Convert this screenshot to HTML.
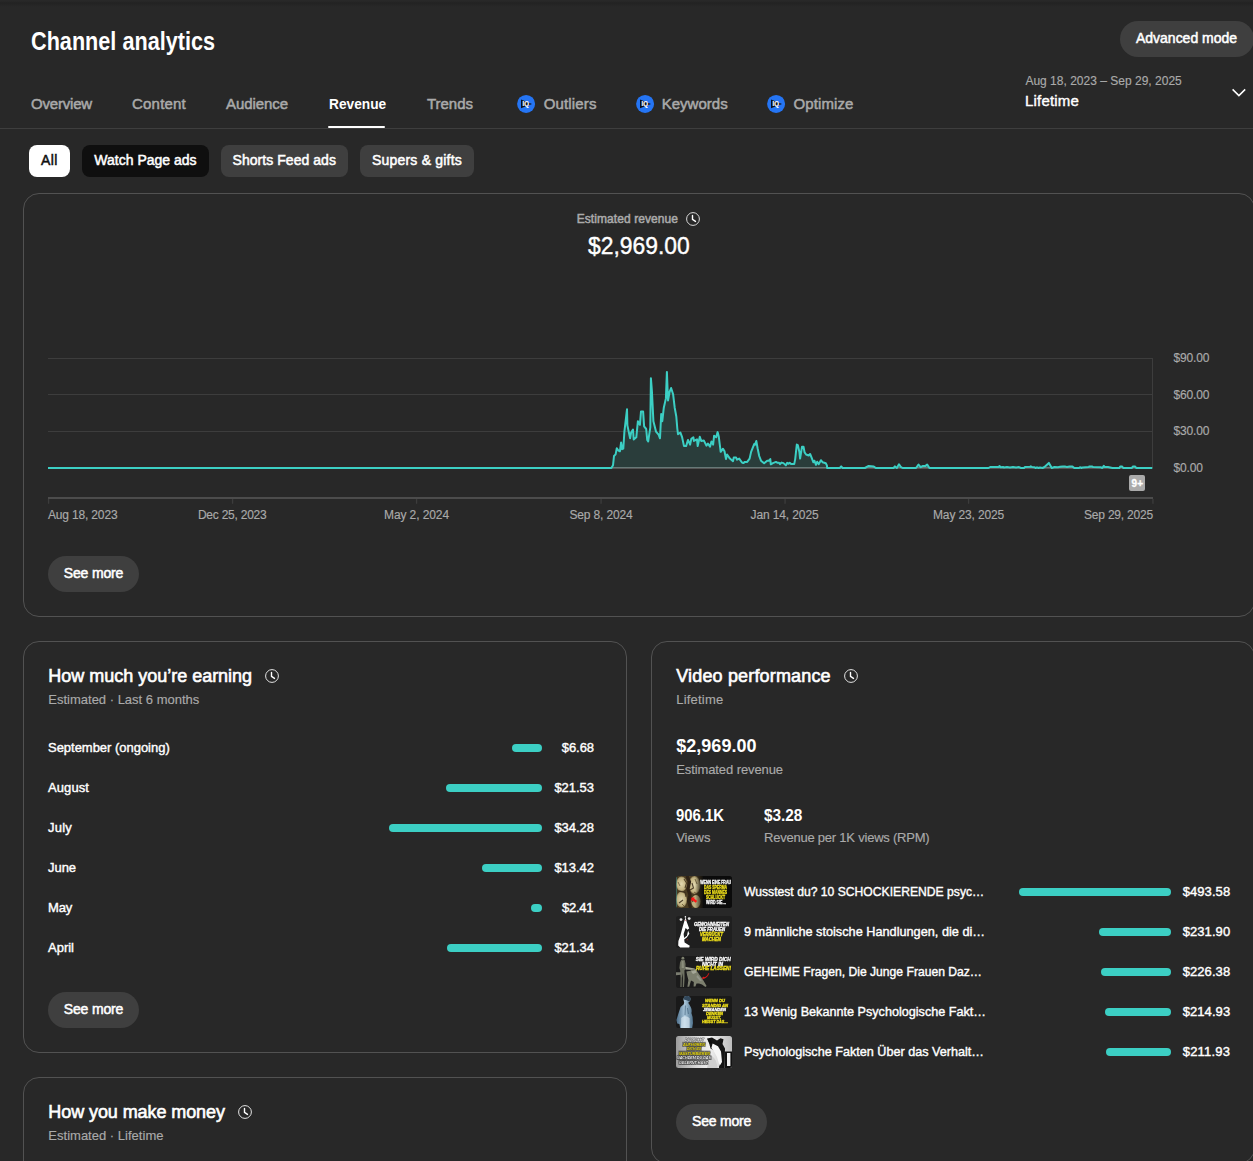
<!DOCTYPE html>
<html lang="en"><head><meta charset="utf-8"><title>Channel analytics</title><style>
html,body{margin:0;padding:0;background:#282828;}
body{width:1253px;height:1161px;overflow:hidden;position:relative;font-family:"Liberation Sans", sans-serif;}
.abs{position:absolute;}
.t{position:absolute;white-space:nowrap;margin:0;}
.t.r{-webkit-text-stroke:0.15px currentColor;}
.t.l{-webkit-text-stroke:0.4px currentColor;}
.t.m{-webkit-text-stroke:0.5px currentColor;}
.t.h{-webkit-text-stroke:0.6px currentColor;}
.t.b{font-weight:700;}
.card{box-sizing:border-box;border:1px solid #525252;border-radius:16px;}
.bar{height:8px;border-radius:4px;background:#3ccfc4;}
</style></head>
<body>
<div class="abs" style="left:0;top:0;width:1253px;height:8px;background:linear-gradient(#282828 0,#282828 1px,#222 3px,#242424 4px,#282828 7px)"></div>
<div class="abs" style="left:0;top:128px;width:1253px;height:1px;background:#3e3e3e"></div>
<div class="abs" style="left:328px;top:125.6px;width:57.2px;height:2.4px;border-radius:1.2px;background:#fff"></div>
<div class="abs" style="left:1120px;top:21px;width:133.5px;height:36px;border-radius:18.0px;background:#3f3f3f"></div>
<svg class="abs" style="left:1229px;top:84px" width="20" height="18" viewBox="0 0 20 18"><path d="M3.6 5.4 L9.9 11.6 L16.2 5.4" fill="none" stroke="#fff" stroke-width="1.5"/></svg>
<svg class="abs" style="left:516px;top:94px" width="20" height="20" viewBox="-10 -10 20 20"><circle cx="0.1" cy="-0.1" r="9" fill="#2575f4"/><path d="M-5 -4.5 L6 0 L-5 4.3 Z" fill="#0a0f1c"/><text x="-3.5" y="2.35" font-family='"Liberation Sans", sans-serif' font-size="6.4" font-weight="700" fill="#fff" stroke="#fff" stroke-width="0.2" textLength="6.5" lengthAdjust="spacingAndGlyphs">IQ</text></svg>
<svg class="abs" style="left:635px;top:94px" width="20" height="20" viewBox="-10 -10 20 20"><circle cx="0.1" cy="-0.1" r="9" fill="#2575f4"/><path d="M-5 -4.5 L6 0 L-5 4.3 Z" fill="#0a0f1c"/><text x="-3.5" y="2.35" font-family='"Liberation Sans", sans-serif' font-size="6.4" font-weight="700" fill="#fff" stroke="#fff" stroke-width="0.2" textLength="6.5" lengthAdjust="spacingAndGlyphs">IQ</text></svg>
<svg class="abs" style="left:766px;top:94px" width="20" height="20" viewBox="-10 -10 20 20"><circle cx="0.1" cy="-0.1" r="9" fill="#2575f4"/><path d="M-5 -4.5 L6 0 L-5 4.3 Z" fill="#0a0f1c"/><text x="-3.5" y="2.35" font-family='"Liberation Sans", sans-serif' font-size="6.4" font-weight="700" fill="#fff" stroke="#fff" stroke-width="0.2" textLength="6.5" lengthAdjust="spacingAndGlyphs">IQ</text></svg>
<div class="abs" style="left:29px;top:145px;width:41px;height:32px;border-radius:8px;background:#ffffff"></div>
<div class="abs" style="left:82px;top:145px;width:127px;height:32px;border-radius:8px;background:#0f0f0f"></div>
<div class="abs" style="left:220.5px;top:145px;width:127.5px;height:32px;border-radius:8px;background:#3f3f3f"></div>
<div class="abs" style="left:360px;top:145px;width:114px;height:32px;border-radius:8px;background:#3f3f3f"></div>
<div class="abs card" style="left:23px;top:193px;width:1232px;height:423.5px"></div>
<div class="abs card" style="left:23px;top:641px;width:604px;height:411.5px"></div>
<div class="abs card" style="left:651px;top:641px;width:604px;height:523px"></div>
<div class="abs card" style="left:23px;top:1077px;width:604px;height:223px"></div>
<svg class="abs" style="left:0;top:0" width="1253" height="560" viewBox="0 0 1253 560"><rect x="48" y="358" width="1105" height="1" fill="#3d3d3d"/><rect x="48" y="394" width="1105" height="1" fill="#3d3d3d"/><rect x="48" y="431" width="1105" height="1" fill="#3d3d3d"/><rect x="48" y="467.4" width="1104" height="1" fill="#9a9a9a"/><rect x="1152" y="358" width="1" height="110" fill="#3d3d3d"/><rect x="48" y="497" width="1105" height="2" fill="#4c4c4c"/><rect x="47.9" y="499" width="1.3" height="4.8" fill="#3c3c3c"/><rect x="231.9" y="499" width="1.3" height="4.8" fill="#3c3c3c"/><rect x="415.9" y="499" width="1.3" height="4.8" fill="#3c3c3c"/><rect x="600.4" y="499" width="1.3" height="4.8" fill="#3c3c3c"/><rect x="784.4" y="499" width="1.3" height="4.8" fill="#3c3c3c"/><rect x="967.9" y="499" width="1.3" height="4.8" fill="#3c3c3c"/><rect x="1152.3000000000002" y="499" width="1.3" height="4.8" fill="#3c3c3c"/><polygon points="48,468 48.0,468.0 611.4,468.0 613.0,465.3 614.0,456.0 615.6,454.4 616.8,448.2 618.2,450.3 619.9,451.3 621.1,442.5 622.1,449.2 623.3,448.7 624.4,431.6 627.0,409.3 627.4,425.4 630.1,438.3 631.1,432.6 633.0,429.5 633.7,439.4 636.3,437.3 637.9,421.2 639.9,424.8 641.0,411.4 643.1,411.4 644.1,426.4 646.2,429.0 647.2,439.9 648.2,441.4 650.3,427.4 650.9,378.2 651.9,391.1 653.4,421.2 656.0,431.6 658.6,434.7 660.0,438.3 661.2,414.0 662.3,421.2 663.8,407.7 665.9,398.4 666.9,371.9 668.0,400.5 669.5,392.2 671.1,388.0 673.1,394.2 674.7,407.7 676.3,416.5 677.3,428.5 678.0,434.2 680.4,432.6 682.0,436.8 684.0,446.1 686.1,446.1 688.0,439.9 690.1,444.6 691.3,438.9 693.4,437.3 693.9,440.9 697.0,439.4 697.7,446.1 699.8,436.8 701.2,440.9 703.8,440.4 706.4,445.6 707.9,443.5 710.0,446.6 711.5,441.4 713.1,444.6 714.1,435.7 716.2,437.3 717.6,432.1 718.8,436.8 720.7,451.8 723.0,448.7 724.5,451.3 726.0,459.1 727.1,454.5 729.9,458.6 733.0,461.2 733.7,457.6 736.1,457.6 737.1,459.7 739.2,458.6 741.8,462.3 743.3,463.1 744.9,461.9 747.2,461.9 749.6,458.6 751.1,451.9 754.2,444.1 755.0,444.6 756.3,441.0 757.6,448.2 759.2,456.0 761.0,460.7 764.1,463.3 767.2,460.7 768.8,460.7 770.3,459.1 770.8,464.3 772.9,463.1 776.0,461.9 777.6,462.8 779.1,462.8 780.0,464.1 781.7,462.6 783.5,463.1 785.9,465.4 787.2,462.8 788.5,463.8 789.7,462.8 791.1,464.1 794.2,464.1 795.2,459.1 796.8,444.6 797.8,445.1 799.4,451.9 800.1,458.6 802.0,446.7 803.5,446.7 804.6,452.4 806.1,454.5 808.7,455.5 810.1,454.0 811.8,458.1 813.4,462.3 814.4,460.7 816.0,464.8 817.2,461.7 818.8,464.1 820.9,460.2 822.7,462.3 825.8,463.3 826.9,465.4 827.1,468.0 839.8,468.0 841.2,466.4 842.6,468.0 864.9,468.0 868.7,465.9 873.8,466.6 875.8,468.0 893.6,468.0 894.9,466.4 896.8,468.0 899.0,464.3 900.7,466.8 902.6,468.0 916.0,468.0 918.5,464.6 920.7,467.2 923.0,465.9 925.6,465.9 927.2,464.6 929.4,468.0 988.5,468.0 990.2,467.0 998.6,467.0 999.6,466.0 1000.6,467.3 1003.0,467.0 1004.0,467.5 1007.0,467.1 1010.0,467.5 1013.0,467.0 1016.0,467.5 1019.0,467.1 1021.0,468.0 1024.0,468.0 1025.0,466.9 1030.0,466.8 1030.8,466.3 1032.0,467.0 1034.5,467.2 1035.5,468.0 1037.0,467.3 1038.5,468.0 1040.0,467.5 1042.6,468.0 1044.5,467.0 1048.9,462.9 1051.8,468.0 1054.4,467.0 1058.0,467.2 1060.0,466.8 1062.8,466.6 1065.5,466.6 1067.0,467.0 1069.4,466.6 1072.5,466.6 1074.3,468.0 1079.1,468.0 1080.3,467.2 1081.4,468.0 1082.5,467.4 1088.8,466.9 1089.5,466.4 1092.3,466.4 1093.0,467.0 1100.6,467.2 1102.3,468.0 1103.8,465.9 1104.6,467.0 1108.0,467.0 1112.4,468.0 1119.4,468.0 1120.2,466.6 1122.2,466.6 1123.2,468.0 1131.9,468.0 1132.8,466.6 1135.2,466.6 1136.2,468.0 1152.3,468.0 1152.1,468" fill="#3ccfc4" fill-opacity="0.13"/><polyline points="48.0,468.0 611.4,468.0 613.0,465.3 614.0,456.0 615.6,454.4 616.8,448.2 618.2,450.3 619.9,451.3 621.1,442.5 622.1,449.2 623.3,448.7 624.4,431.6 627.0,409.3 627.4,425.4 630.1,438.3 631.1,432.6 633.0,429.5 633.7,439.4 636.3,437.3 637.9,421.2 639.9,424.8 641.0,411.4 643.1,411.4 644.1,426.4 646.2,429.0 647.2,439.9 648.2,441.4 650.3,427.4 650.9,378.2 651.9,391.1 653.4,421.2 656.0,431.6 658.6,434.7 660.0,438.3 661.2,414.0 662.3,421.2 663.8,407.7 665.9,398.4 666.9,371.9 668.0,400.5 669.5,392.2 671.1,388.0 673.1,394.2 674.7,407.7 676.3,416.5 677.3,428.5 678.0,434.2 680.4,432.6 682.0,436.8 684.0,446.1 686.1,446.1 688.0,439.9 690.1,444.6 691.3,438.9 693.4,437.3 693.9,440.9 697.0,439.4 697.7,446.1 699.8,436.8 701.2,440.9 703.8,440.4 706.4,445.6 707.9,443.5 710.0,446.6 711.5,441.4 713.1,444.6 714.1,435.7 716.2,437.3 717.6,432.1 718.8,436.8 720.7,451.8 723.0,448.7 724.5,451.3 726.0,459.1 727.1,454.5 729.9,458.6 733.0,461.2 733.7,457.6 736.1,457.6 737.1,459.7 739.2,458.6 741.8,462.3 743.3,463.1 744.9,461.9 747.2,461.9 749.6,458.6 751.1,451.9 754.2,444.1 755.0,444.6 756.3,441.0 757.6,448.2 759.2,456.0 761.0,460.7 764.1,463.3 767.2,460.7 768.8,460.7 770.3,459.1 770.8,464.3 772.9,463.1 776.0,461.9 777.6,462.8 779.1,462.8 780.0,464.1 781.7,462.6 783.5,463.1 785.9,465.4 787.2,462.8 788.5,463.8 789.7,462.8 791.1,464.1 794.2,464.1 795.2,459.1 796.8,444.6 797.8,445.1 799.4,451.9 800.1,458.6 802.0,446.7 803.5,446.7 804.6,452.4 806.1,454.5 808.7,455.5 810.1,454.0 811.8,458.1 813.4,462.3 814.4,460.7 816.0,464.8 817.2,461.7 818.8,464.1 820.9,460.2 822.7,462.3 825.8,463.3 826.9,465.4 827.1,468.0 839.8,468.0 841.2,466.4 842.6,468.0 864.9,468.0 868.7,465.9 873.8,466.6 875.8,468.0 893.6,468.0 894.9,466.4 896.8,468.0 899.0,464.3 900.7,466.8 902.6,468.0 916.0,468.0 918.5,464.6 920.7,467.2 923.0,465.9 925.6,465.9 927.2,464.6 929.4,468.0 988.5,468.0 990.2,467.0 998.6,467.0 999.6,466.0 1000.6,467.3 1003.0,467.0 1004.0,467.5 1007.0,467.1 1010.0,467.5 1013.0,467.0 1016.0,467.5 1019.0,467.1 1021.0,468.0 1024.0,468.0 1025.0,466.9 1030.0,466.8 1030.8,466.3 1032.0,467.0 1034.5,467.2 1035.5,468.0 1037.0,467.3 1038.5,468.0 1040.0,467.5 1042.6,468.0 1044.5,467.0 1048.9,462.9 1051.8,468.0 1054.4,467.0 1058.0,467.2 1060.0,466.8 1062.8,466.6 1065.5,466.6 1067.0,467.0 1069.4,466.6 1072.5,466.6 1074.3,468.0 1079.1,468.0 1080.3,467.2 1081.4,468.0 1082.5,467.4 1088.8,466.9 1089.5,466.4 1092.3,466.4 1093.0,467.0 1100.6,467.2 1102.3,468.0 1103.8,465.9 1104.6,467.0 1108.0,467.0 1112.4,468.0 1119.4,468.0 1120.2,466.6 1122.2,466.6 1123.2,468.0 1131.9,468.0 1132.8,466.6 1135.2,466.6 1136.2,468.0 1152.3,468.0" fill="none" stroke="#3ccfc4" stroke-width="2" stroke-linejoin="round" stroke-linecap="butt"/></svg>
<svg class="abs" style="left:684.1px;top:209.9px" width="18" height="18" viewBox="-9 -9 18 18"><circle cx="0" cy="0" r="6.4" fill="none" stroke="#d8d8d8" stroke-width="1"/><path d="M-0.5 -3.5 V0.4 L2.5 2.4" fill="none" stroke="#fff" stroke-width="1.4" stroke-linecap="round" stroke-linejoin="round"/></svg>
<div class="abs" style="left:1129.3px;top:475px;width:16px;height:16px;border-radius:2px;background:#aaaaaa;color:#fff;font-size:10px;font-weight:700;line-height:17px;text-align:center;-webkit-text-stroke:0.3px #fff">9+</div>
<div class="abs" style="left:48px;top:555.5px;width:91px;height:36.0px;border-radius:18.0px;background:#3f3f3f"></div>
<div class="abs" style="left:48px;top:991.5px;width:91px;height:36.0px;border-radius:18.0px;background:#3f3f3f"></div>
<div class="abs" style="left:676px;top:1103.5px;width:91px;height:36.0px;border-radius:18.0px;background:#3f3f3f"></div>
<svg class="abs" style="left:263px;top:667px" width="18" height="18" viewBox="-9 -9 18 18"><circle cx="0" cy="0" r="6.4" fill="none" stroke="#e4e4e4" stroke-width="1"/><path d="M-0.5 -3.5 V0.4 L2.5 2.4" fill="none" stroke="#fff" stroke-width="1.4" stroke-linecap="round" stroke-linejoin="round"/></svg>
<svg class="abs" style="left:842px;top:667px" width="18" height="18" viewBox="-9 -9 18 18"><circle cx="0" cy="0" r="6.4" fill="none" stroke="#e4e4e4" stroke-width="1"/><path d="M-0.5 -3.5 V0.4 L2.5 2.4" fill="none" stroke="#fff" stroke-width="1.4" stroke-linecap="round" stroke-linejoin="round"/></svg>
<svg class="abs" style="left:236px;top:1103px" width="18" height="18" viewBox="-9 -9 18 18"><circle cx="0" cy="0" r="6.4" fill="none" stroke="#e4e4e4" stroke-width="1"/><path d="M-0.5 -3.5 V0.4 L2.5 2.4" fill="none" stroke="#fff" stroke-width="1.4" stroke-linecap="round" stroke-linejoin="round"/></svg>
<div class="abs bar" style="left:512px;top:744px;width:30px"></div>
<div class="abs bar" style="left:446px;top:784px;width:96px"></div>
<div class="abs bar" style="left:389px;top:824px;width:153px"></div>
<div class="abs bar" style="left:482px;top:864px;width:60px"></div>
<div class="abs bar" style="left:531px;top:904px;width:11px"></div>
<div class="abs bar" style="left:447px;top:944px;width:95px"></div>
<div class="abs bar" style="left:1019px;top:888px;width:152px"></div>
<div class="abs bar" style="left:1099px;top:928px;width:72px"></div>
<div class="abs bar" style="left:1101px;top:968px;width:70px"></div>
<div class="abs bar" style="left:1105px;top:1008px;width:66px"></div>
<div class="abs bar" style="left:1106px;top:1048px;width:65px"></div>
<svg class="abs" style="left:676px;top:876px;will-change:transform" width="56" height="32" viewBox="0 0 56 32" font-family="Liberation Sans, sans-serif"><defs><clipPath id="tc0"><rect width="56" height="32" rx="2.5"/></clipPath><radialGradient id="g1a" cx="0.5" cy="0.5" r="0.6"><stop offset="0" stop-color="#e2d8b0"/><stop offset="0.65" stop-color="#c3b482"/><stop offset="1" stop-color="#5d4c2a"/></radialGradient><linearGradient id="g1b" x1="0" x2="1"><stop offset="0" stop-color="#000" stop-opacity="0"/><stop offset="1" stop-color="#0b0b0b"/></linearGradient></defs><g clip-path="url(#tc0)"><rect width="56" height="32" fill="#0b0b0b"/><rect width="27" height="32" fill="#4a3c22"/><ellipse cx="5.5" cy="8" rx="5.5" ry="7.5" fill="url(#g1a)"/><ellipse cx="18.5" cy="9" rx="6" ry="9" fill="url(#g1a)"/><ellipse cx="5.5" cy="23.5" rx="5.5" ry="8" fill="url(#g1a)"/><ellipse cx="20" cy="25.5" rx="4.6" ry="6.4" fill="#bfb080"/><path d="M11 0 L13.5 6 L12 13 L14 19 L12.5 25 L14.5 32" fill="none" stroke="#2e2216" stroke-width="3.2"/><path d="M8 3 L10.5 7 L9 12 M14 14 L17.5 12 L16 7 M3 15 L9 16.5 L10 21 M15 21 L17 26 M3 27 L7 24" stroke="#3a2c1a" stroke-width="1.1" fill="none" opacity="0.85"/><path d="M2 6 L4 10 M19 3 L21 8 M6 28 L8 30 M18 16 L21 18" stroke="#5a4828" stroke-width="0.9" fill="none" opacity="0.8"/><rect x="0" y="0" width="0.8" height="32" fill="#3a8a8a" opacity="0.7"/><rect x="19" y="0" width="9" height="32" fill="url(#g1b)"/><path d="M15.2 21.8 L18.6 21.2 L18.2 22.6 L21.2 25 L19.6 26.8 L16.8 24.4 L15.6 25.4 Z" fill="#ff1616"/><text x="24.3" y="8.30" font-size="5.03" font-weight="700" fill="#ffffff" stroke="#ffffff" stroke-width="0.28" textLength="30.7" lengthAdjust="spacingAndGlyphs">WENN EINE FRAU</text><text x="28.0" y="12.60" font-size="5.31" font-weight="700" fill="#f2e21a" stroke="#f2e21a" stroke-width="0.28" textLength="23.0" lengthAdjust="spacingAndGlyphs">DAS SPERMA</text><text x="28.0" y="17.50" font-size="5.31" font-weight="700" fill="#f2e21a" stroke="#f2e21a" stroke-width="0.28" textLength="23.0" lengthAdjust="spacingAndGlyphs">DES MANNES</text><text x="30.0" y="22.50" font-size="5.31" font-weight="700" fill="#f2e21a" stroke="#f2e21a" stroke-width="0.28" textLength="19.0" lengthAdjust="spacingAndGlyphs">SCHLUCKT</text><text x="30.0" y="27.90" font-size="5.03" font-weight="700" fill="#ffffff" stroke="#ffffff" stroke-width="0.28" textLength="20.0" lengthAdjust="spacingAndGlyphs">WIRD SIE…</text></g></svg>
<svg class="abs" style="left:676px;top:916px;will-change:transform" width="56" height="32" viewBox="0 0 56 32" font-family="Liberation Sans, sans-serif"><defs><clipPath id="tc1"><rect width="56" height="32" rx="2.5"/></clipPath></defs><g clip-path="url(#tc1)"><rect width="56" height="32" fill="#1f1f1f"/><path d="M9.6 1.2 L10.6 5.5 L13.2 12.5 L11.6 13.5 L13.4 17.8 L10.8 21.5 L8.2 23.5 L8.6 26.5 L13.8 29.8 L13.2 31.4 L4.2 31.6 L2.2 29.6 L2.4 25 L4.4 19.5 L6.2 12.5 L8.2 5.5 Z" fill="#fff"/><path d="M9.6 12 L12.2 14.2 L11 19.5 L8.2 22 L7.6 18 Z" fill="#1f1f1f"/><circle cx="5" cy="3.6" r="1.4" fill="#e8e8e8"/><circle cx="13.2" cy="2.6" r="1.4" fill="#e8e8e8"/><circle cx="9.4" cy="0.9" r="0.8" fill="#fff"/><circle cx="11.2" cy="23.8" r="0.5" fill="#d22"/><circle cx="9.6" cy="4.2" r="0.45" fill="#d22"/><text x="18.0" y="10.20" font-size="4.47" font-weight="700" font-style="italic" fill="#ffffff" stroke="#ffffff" stroke-width="0.28" textLength="35.0" lengthAdjust="spacingAndGlyphs">GEWOHNHEITEN</text><text x="23.0" y="15.00" font-size="4.47" font-weight="700" font-style="italic" fill="#ffffff" stroke="#ffffff" stroke-width="0.28" textLength="26.0" lengthAdjust="spacingAndGlyphs">DIE FRAUEN</text><text x="24.0" y="20.10" font-size="4.47" font-weight="700" font-style="italic" fill="#f2e21a" stroke="#f2e21a" stroke-width="0.28" textLength="23.0" lengthAdjust="spacingAndGlyphs">VERRÜCKT</text><text x="26.0" y="24.90" font-size="4.47" font-weight="700" font-style="italic" fill="#f2e21a" stroke="#f2e21a" stroke-width="0.28" textLength="19.0" lengthAdjust="spacingAndGlyphs">MACHEN</text></g></svg>
<svg class="abs" style="left:676px;top:956px;will-change:transform" width="56" height="32" viewBox="0 0 56 32" font-family="Liberation Sans, sans-serif"><defs><clipPath id="tc2"><rect width="56" height="32" rx="2.5"/></clipPath></defs><g clip-path="url(#tc2)"><rect width="56" height="32" fill="#1b1b1b"/><circle cx="6.9" cy="2.2" r="1.4" fill="#7d806e"/><path d="M5.3 3.8 L8.6 3.8 L9.6 8 L9.2 13.5 L8.4 14.5 L8.6 22 L8 31 L6.8 31 L6.9 22 L6.4 17 L5.8 22 L5.6 31 L4.4 31 L4.6 22 L4.2 14.5 L3.4 12 L4 6.5 Z" fill="#6e7161"/><path d="M5.6 5 L7.6 5 L8 12 L5.6 12 Z" fill="#8b8e7c"/><path d="M9.2 10.8 L18.6 12.6 L19 14 L9.4 13.6 Z" fill="#a3a594"/><path d="M10.4 15.6 L14.5 14.8 L17 12.8 L20 13 L21.2 15.6 L24 19.5 L27.4 24.5 L30.6 30 L29.4 31 L26 28.6 L23 27.4 L20.5 27.6 L19.4 30.6 L17.6 30.6 L17.8 26 L15 24.5 L13.2 30.8 L11.4 30.8 L12.4 24 L11.2 19.5 Z" fill="#7c7f6e"/><path d="M15 15.4 L19.6 14 L20.6 16.4 L17 18 Z" fill="#a5a797"/><path d="M21.5 19 L26 24.6 L24 25 L20.4 21 Z" fill="#93968a"/><path d="M0 16.2 L5 16.2 L5 18.8 L0 19.2 Z" fill="#7a7c70"/><path d="M32.8 17.2 C32 20.5 29.8 22.3 26.4 22.8 L27 21 L28.8 21.6 C31 20.4 32 19 32.8 17.2 Z" fill="#f01818" stroke="#f01818" stroke-width="0.5"/><text x="19.8" y="5.35" font-size="4.61" font-weight="700" font-style="italic" fill="#ffffff" stroke="#ffffff" stroke-width="0.28" textLength="35.0" lengthAdjust="spacingAndGlyphs">SIE WIRD DICH</text><text x="26.0" y="9.55" font-size="4.61" font-weight="700" font-style="italic" fill="#ffffff" stroke="#ffffff" stroke-width="0.28" textLength="21.0" lengthAdjust="spacingAndGlyphs">NICHT IN</text><text x="20.0" y="14.00" font-size="4.75" font-weight="700" font-style="italic" fill="#f2e21a" stroke="#f2e21a" stroke-width="0.28" textLength="35.0" lengthAdjust="spacingAndGlyphs">RUHE LASSEN!</text></g></svg>
<svg class="abs" style="left:676px;top:996px;will-change:transform" width="56" height="32" viewBox="0 0 56 32" font-family="Liberation Sans, sans-serif"><defs><clipPath id="tc3"><rect width="56" height="32" rx="2.5"/></clipPath><linearGradient id="g4" x1="0" x2="1"><stop offset="0" stop-color="#4a6c88"/><stop offset="0.5" stop-color="#a9c6da"/><stop offset="1" stop-color="#4f728c"/></linearGradient></defs><g clip-path="url(#tc3)"><rect width="56" height="32" fill="#191919"/><path d="M8 1.4 C9 -0.6 13.4 -0.4 14.4 2 C15 4 13.8 6 12.2 6.8 L13.6 9 C15.2 11.5 16.2 14 15.4 17 L16.6 21 L17 27 L16.2 32 L4.2 32 L3.4 28 L1.2 27.6 L0.4 24 L2.6 17 L4.6 11 L7.8 8.2 L8.2 6 C7.2 4.6 7.2 2.8 8 1.4 Z" fill="url(#g4)"/><path d="M5.2 22 C7.5 19.5 11.5 19.5 13.6 22.5 L13.6 32 L5 32 Z" fill="#e4f0f8" opacity="0.6"/><path d="M9.4 9.5 L9 19 M11.5 12 L12.4 18" stroke="#3f607a" stroke-width="0.7" fill="none"/><path d="M8 1.4 C9 -0.6 13.4 -0.4 14.4 2 C14.6 3.2 14.2 4.4 13.4 5.4 C11.5 4.6 9.5 4 7.7 3.6 C7.6 2.8 7.7 2 8 1.4 Z" fill="#33495c"/><text x="29.0" y="6.10" font-size="4.19" font-weight="700" font-style="italic" fill="#f2e21a" stroke="#f2e21a" stroke-width="0.28" textLength="19.9" lengthAdjust="spacingAndGlyphs">WENN DU</text><text x="26.0" y="11.00" font-size="4.19" font-weight="700" font-style="italic" fill="#f2e21a" stroke="#f2e21a" stroke-width="0.28" textLength="26.0" lengthAdjust="spacingAndGlyphs">STÄNDIG AN</text><text x="27.0" y="15.10" font-size="4.19" font-weight="700" font-style="italic" fill="#ffffff" stroke="#ffffff" stroke-width="0.28" textLength="23.0" lengthAdjust="spacingAndGlyphs">JEMANDEN</text><text x="30.0" y="19.30" font-size="4.19" font-weight="700" font-style="italic" fill="#f2e21a" stroke="#f2e21a" stroke-width="0.28" textLength="17.0" lengthAdjust="spacingAndGlyphs">DENKEN</text><text x="31.0" y="23.20" font-size="4.19" font-weight="700" font-style="italic" fill="#f2e21a" stroke="#f2e21a" stroke-width="0.28" textLength="14.0" lengthAdjust="spacingAndGlyphs">MUSST,</text><text x="26.0" y="27.40" font-size="4.19" font-weight="700" font-style="italic" fill="#f2e21a" stroke="#f2e21a" stroke-width="0.28" textLength="26.0" lengthAdjust="spacingAndGlyphs">HEISST DAS…</text></g></svg>
<svg class="abs" style="left:676px;top:1036px;will-change:transform" width="56" height="32" viewBox="0 0 56 32" font-family="Liberation Sans, sans-serif"><defs><clipPath id="tc4"><rect width="56" height="32" rx="2.5"/></clipPath><linearGradient id="g5" x1="0" x2="1"><stop offset="0" stop-color="#9c9c9c"/><stop offset="0.35" stop-color="#d8d8d8"/><stop offset="0.6" stop-color="#efefef"/><stop offset="1" stop-color="#bdbdbd"/></linearGradient></defs><g clip-path="url(#tc4)"><rect width="56" height="32" fill="url(#g5)"/><path d="M31 2.4 L36 1.4 L41 4.4 L44.5 2.2 L47.5 3.2 L46.5 8 L49 12.5 L48.5 32 L43 32 L43.5 20 L39 15 L34.5 12.5 L33.2 7.5 Z" fill="#141414"/><path d="M36.6 7.6 L42 10.2 L45 15.5 L46 26 L43.6 30 L41 21 L38 15.5 L35.4 12 Z" fill="#f6f6f6"/><path d="M31.5 3 L35 4.6 L36.5 7.4 L33.6 7.6 Z" fill="#0c0c0c"/><rect x="48.6" y="15.5" width="7.4" height="16.5" fill="#111"/><rect x="51" y="17" width="3.4" height="13" fill="#f0f0f0"/><path d="M36 20 C39 22 41 26 41.5 32 L31 32 C32 27 33.6 23 36 20 Z" fill="#cfcfcf"/><rect x="6.2" y="5.8" width="23.6" height="5" fill="#3a3a2a" opacity="0.55"/><rect x="10.2" y="10.2" width="15.6" height="4.8" fill="#3a3a2a" opacity="0.55"/><rect x="2.4" y="14.6" width="32" height="5" fill="#3a3a2a" opacity="0.6"/><rect x="0.6" y="19.4" width="35" height="4.6" fill="#333" opacity="0.6"/><rect x="2.4" y="24" width="30" height="4.8" fill="#333" opacity="0.6"/><text x="9.0" y="4.80" font-size="4.19" font-weight="700" font-style="italic" fill="#ffffff" stroke="#111" stroke-width="0.6" paint-order="stroke" textLength="19.0" lengthAdjust="spacingAndGlyphs">DU MUSST</text><text x="7.0" y="9.85" font-size="4.33" font-weight="700" font-style="italic" fill="#f2e21a" stroke="#222" stroke-width="0.6" paint-order="stroke" textLength="22.0" lengthAdjust="spacingAndGlyphs">AUFHÖREN</text><text x="11.0" y="14.10" font-size="4.19" font-weight="700" font-style="italic" fill="#f2e21a" stroke="#222" stroke-width="0.6" paint-order="stroke" textLength="14.0" lengthAdjust="spacingAndGlyphs">DICH ZU</text><text x="3.0" y="18.65" font-size="4.33" font-weight="700" font-style="italic" fill="#f2e21a" stroke="#222" stroke-width="0.6" paint-order="stroke" textLength="31.0" lengthAdjust="spacingAndGlyphs">MASTURBIEREN</text><text x="1.0" y="23.20" font-size="4.19" font-weight="700" font-style="italic" fill="#ffffff" stroke="#111" stroke-width="0.6" paint-order="stroke" textLength="34.0" lengthAdjust="spacingAndGlyphs">NACHDEM DU DAS</text><text x="3.0" y="27.90" font-size="4.19" font-weight="700" font-style="italic" fill="#ffffff" stroke="#111" stroke-width="0.6" paint-order="stroke" textLength="29.0" lengthAdjust="spacingAndGlyphs">GELERNT HAST</text></g></svg>
<div class="t b" id="t0" style="top:27px;line-height:28px;font-size:25px;color:#fff;left:31px;transform:scaleX(0.8656);transform-origin:0 50%;">Channel analytics</div>
<div class="t m" id="t1" style="top:95px;line-height:17px;font-size:15px;color:#aaaaaa;left:31px;letter-spacing:-0.189px;">Overview</div>
<div class="t m" id="t2" style="top:95px;line-height:17px;font-size:15px;color:#aaaaaa;left:132px;letter-spacing:0.208px;">Content</div>
<div class="t m" id="t3" style="top:95px;line-height:17px;font-size:15px;color:#aaaaaa;left:226px;letter-spacing:-0.070px;">Audience</div>
<div class="t b" id="t4" style="top:95px;line-height:17px;font-size:15.5px;color:#fff;left:328.8px;transform:scaleX(0.8851);transform-origin:0 50%;">Revenue</div>
<div class="t m" id="t5" style="top:95px;line-height:17px;font-size:15px;color:#aaaaaa;left:427px;letter-spacing:-0.023px;">Trends</div>
<div class="t m" id="t6" style="top:95px;line-height:17px;font-size:15px;color:#aaaaaa;left:543.7px;letter-spacing:0.164px;">Outliers</div>
<div class="t m" id="t7" style="top:95px;line-height:17px;font-size:15px;color:#aaaaaa;left:661.7px;letter-spacing:0.018px;">Keywords</div>
<div class="t m" id="t8" style="top:95px;line-height:17px;font-size:15px;color:#aaaaaa;left:793.5px;letter-spacing:0.102px;">Optimize</div>
<div class="t m" id="t9" style="top:30px;line-height:16px;font-size:14px;color:#fff;left:1136px;letter-spacing:-0.014px;">Advanced mode</div>
<div class="t r" id="t10" style="top:74px;line-height:14px;font-size:12px;color:#aaaaaa;left:1025.4px;letter-spacing:0.010px;">Aug 18, 2023 – Sep 29, 2025</div>
<div class="t l" id="t11" style="top:91.5px;line-height:17px;font-size:15px;color:#fff;left:1025px;letter-spacing:0.184px;">Lifetime</div>
<div class="t m" id="t12" style="top:152px;line-height:16px;font-size:14px;color:#0f0f0f;left:41px;letter-spacing:0.413px;">All</div>
<div class="t m" id="t13" style="top:152px;line-height:16px;font-size:14px;color:#fff;left:94.3px;letter-spacing:0.006px;">Watch Page ads</div>
<div class="t m" id="t14" style="top:152px;line-height:16px;font-size:14px;color:#fff;left:232.5px;letter-spacing:0.051px;">Shorts Feed ads</div>
<div class="t m" id="t15" style="top:152px;line-height:16px;font-size:14px;color:#fff;left:372px;letter-spacing:0.203px;">Supers &amp; gifts</div>
<div class="t m" id="t16" style="top:212px;line-height:14px;font-size:12px;color:#aaaaaa;left:576.7px;letter-spacing:0.079px;">Estimated revenue</div>
<div class="t l" id="t17" style="top:232px;line-height:27px;font-size:24px;color:#fff;left:588.3px;transform:scaleX(0.9534);transform-origin:0 50%;">$2,969.00</div>
<div class="t r" id="t18" style="top:351px;line-height:14px;font-size:12px;color:#aaaaaa;left:1173.4px;letter-spacing:-0.117px;">$90.00</div>
<div class="t r" id="t19" style="top:388px;line-height:14px;font-size:12px;color:#aaaaaa;left:1173.4px;letter-spacing:-0.117px;">$60.00</div>
<div class="t r" id="t20" style="top:424px;line-height:14px;font-size:12px;color:#aaaaaa;left:1173.4px;letter-spacing:-0.117px;">$30.00</div>
<div class="t r" id="t21" style="top:461px;line-height:14px;font-size:12px;color:#aaaaaa;left:1173.4px;letter-spacing:-0.126px;">$0.00</div>
<div class="t r" id="t22" style="top:508px;line-height:14px;font-size:12px;color:#aaaaaa;left:48px;letter-spacing:-0.167px;">Aug 18, 2023</div>
<div class="t r" id="t23" style="top:508px;line-height:14px;font-size:12px;color:#aaaaaa;left:232.2px;letter-spacing:-0.241px;transform:translateX(-50%);transform-origin:50% 50%;">Dec 25, 2023</div>
<div class="t r" id="t24" style="top:508px;line-height:14px;font-size:12px;color:#aaaaaa;left:416.5px;letter-spacing:-0.095px;transform:translateX(-50%);transform-origin:50% 50%;">May 2, 2024</div>
<div class="t r" id="t25" style="top:508px;line-height:14px;font-size:12px;color:#aaaaaa;left:601px;letter-spacing:-0.158px;transform:translateX(-50%);transform-origin:50% 50%;">Sep 8, 2024</div>
<div class="t r" id="t26" style="top:508px;line-height:14px;font-size:12px;color:#aaaaaa;left:784.5px;letter-spacing:-0.117px;transform:translateX(-50%);transform-origin:50% 50%;">Jan 14, 2025</div>
<div class="t r" id="t27" style="top:508px;line-height:14px;font-size:12px;color:#aaaaaa;left:968.5px;letter-spacing:-0.143px;transform:translateX(-50%);transform-origin:50% 50%;">May 23, 2025</div>
<div class="t r" id="t28" style="top:508px;line-height:14px;font-size:12px;color:#aaaaaa;right:100px;letter-spacing:-0.201px;">Sep 29, 2025</div>
<div class="t m" id="t29" style="top:565px;line-height:16px;font-size:14px;color:#fff;left:63.8px;letter-spacing:-0.163px;">See more</div>
<div class="t h" id="t30" style="top:666px;line-height:20px;font-size:18px;color:#fff;left:48.3px;letter-spacing:-0.013px;">How much you’re earning</div>
<div class="t r" id="t31" style="top:692px;line-height:15px;font-size:13px;color:#aaaaaa;left:48.3px;letter-spacing:-0.001px;">Estimated · Last 6 months</div>
<div class="t l" id="t32" style="top:740px;line-height:15px;font-size:13px;color:#fff;left:48px;letter-spacing:-0.023px;">September (ongoing)</div>
<div class="t l" id="t33" style="top:740px;line-height:15px;font-size:13px;color:#fff;right:659px;letter-spacing:-0.049px;">$6.68</div>
<div class="t l" id="t34" style="top:780px;line-height:15px;font-size:13px;color:#fff;left:48px;letter-spacing:0.086px;">August</div>
<div class="t l" id="t35" style="top:780px;line-height:15px;font-size:13px;color:#fff;right:659px;letter-spacing:-0.028px;">$21.53</div>
<div class="t l" id="t36" style="top:820px;line-height:15px;font-size:13px;color:#fff;left:48px;letter-spacing:0.219px;">July</div>
<div class="t l" id="t37" style="top:820px;line-height:15px;font-size:13px;color:#fff;right:659px;letter-spacing:-0.028px;">$34.28</div>
<div class="t l" id="t38" style="top:860px;line-height:15px;font-size:13px;color:#fff;left:48px;letter-spacing:-0.051px;">June</div>
<div class="t l" id="t39" style="top:860px;line-height:15px;font-size:13px;color:#fff;right:659px;letter-spacing:-0.028px;">$13.42</div>
<div class="t l" id="t40" style="top:900px;line-height:15px;font-size:13px;color:#fff;left:48px;letter-spacing:-0.188px;">May</div>
<div class="t l" id="t41" style="top:900px;line-height:15px;font-size:13px;color:#fff;right:659.8px;letter-spacing:-0.269px;">$2.41</div>
<div class="t l" id="t42" style="top:940px;line-height:15px;font-size:13px;color:#fff;left:48px;letter-spacing:-0.003px;">April</div>
<div class="t l" id="t43" style="top:940px;line-height:15px;font-size:13px;color:#fff;right:659px;letter-spacing:-0.028px;">$21.34</div>
<div class="t m" id="t44" style="top:1001px;line-height:16px;font-size:14px;color:#fff;left:63.8px;letter-spacing:-0.163px;">See more</div>
<div class="t h" id="t45" style="top:1102px;line-height:20px;font-size:18px;color:#fff;left:48.3px;letter-spacing:-0.082px;">How you make money</div>
<div class="t r" id="t46" style="top:1128px;line-height:15px;font-size:13px;color:#aaaaaa;left:48.3px;letter-spacing:0.016px;">Estimated · Lifetime</div>
<div class="t h" id="t47" style="top:666px;line-height:20px;font-size:18px;color:#fff;left:676.2px;letter-spacing:0.167px;">Video performance</div>
<div class="t r" id="t48" style="top:692px;line-height:15px;font-size:13px;color:#aaaaaa;left:676.2px;letter-spacing:0.221px;">Lifetime</div>
<div class="t b" id="t49" style="top:736px;line-height:20px;font-size:18px;color:#fff;left:676.2px;letter-spacing:0.036px;">$2,969.00</div>
<div class="t r" id="t50" style="top:762px;line-height:15px;font-size:13px;color:#aaaaaa;left:676.2px;letter-spacing:-0.094px;">Estimated revenue</div>
<div class="t b" id="t51" style="top:807px;line-height:17px;font-size:16px;color:#fff;left:676.2px;transform:scaleX(0.9303);transform-origin:0 50%;">906.1K</div>
<div class="t r" id="t52" style="top:830px;line-height:15px;font-size:13px;color:#aaaaaa;left:676.2px;letter-spacing:-0.051px;">Views</div>
<div class="t b" id="t53" style="top:807px;line-height:17px;font-size:16px;color:#fff;left:764px;transform:scaleX(0.9589);transform-origin:0 50%;">$3.28</div>
<div class="t r" id="t54" style="top:830px;line-height:15px;font-size:13px;color:#aaaaaa;left:764px;letter-spacing:-0.224px;">Revenue per 1K views (RPM)</div>
<div class="t l" id="t55" style="top:884px;line-height:15px;font-size:13px;color:#fff;left:744.1px;transform:scaleX(0.9348);transform-origin:0 50%;">Wusstest du? 10 SCHOCKIERENDE psyc…</div>
<div class="t l" id="t56" style="top:884px;line-height:15px;font-size:13px;color:#fff;right:22.8px;letter-spacing:0.071px;">$493.58</div>
<div class="t l" id="t57" style="top:924px;line-height:15px;font-size:13px;color:#fff;left:744.1px;transform:scaleX(0.9779);transform-origin:0 50%;">9 männliche stoische Handlungen, die di…</div>
<div class="t l" id="t58" style="top:924px;line-height:15px;font-size:13px;color:#fff;right:22.8px;letter-spacing:0.071px;">$231.90</div>
<div class="t l" id="t59" style="top:964px;line-height:15px;font-size:13px;color:#fff;left:744.1px;transform:scaleX(0.9331);transform-origin:0 50%;">GEHEIME Fragen, Die Junge Frauen Daz…</div>
<div class="t l" id="t60" style="top:964px;line-height:15px;font-size:13px;color:#fff;right:22.8px;letter-spacing:0.071px;">$226.38</div>
<div class="t l" id="t61" style="top:1004px;line-height:15px;font-size:13px;color:#fff;left:744.1px;transform:scaleX(0.9716);transform-origin:0 50%;">13 Wenig Bekannte Psychologische Fakt…</div>
<div class="t l" id="t62" style="top:1004px;line-height:15px;font-size:13px;color:#fff;right:22.8px;letter-spacing:0.071px;">$214.93</div>
<div class="t l" id="t63" style="top:1044px;line-height:15px;font-size:13px;color:#fff;left:744.1px;transform:scaleX(0.9711);transform-origin:0 50%;">Psychologische Fakten Über das Verhalt…</div>
<div class="t l" id="t64" style="top:1044px;line-height:15px;font-size:13px;color:#fff;right:22.8px;letter-spacing:0.210px;">$211.93</div>
<div class="t m" id="t65" style="top:1113px;line-height:16px;font-size:14px;color:#fff;left:692.1px;letter-spacing:-0.213px;">See more</div>
</body></html>
